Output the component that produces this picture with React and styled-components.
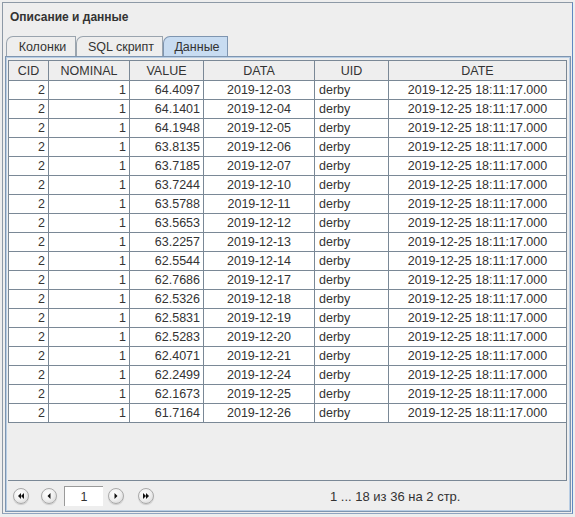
import React from "react";
import styled, { createGlobalStyle } from "styled-components";

const Global = createGlobalStyle`
  html, body { margin: 0; padding: 0; background: #eeeeee; }
  body { font-family: "Liberation Sans", Arial, sans-serif; font-size: 12.5px; color: #333; }
`;

const Frame = styled.div`
  margin: 2px 0 0 2px;
  width: 571px;
  height: 512px;
  box-sizing: border-box;
  border-left: 1px solid #8d99a6;
  border-top: 1px solid #8d99a6;
  border-right: 1px solid #5f88c2;
  border-bottom: 1px solid #8ea4c0;
  display: flex;
  flex-direction: column;
  padding: 0 1px 1px 2px;
`;

const Title = styled.div`
  height: 29px;
  box-sizing: border-box;
  display: flex;
  align-items: center;
  padding: 0 0 2px 5px;
  font-size: 12px;
  font-weight: bold;
  color: #333;
`;

const TabRow = styled.div`
  display: flex;
  height: 20px;
  margin-top: 4px;
  padding-left: 1px;
`;

const Tab = styled.div`
  height: 20px;
  box-sizing: border-box;
  width: ${(p) => p.$w}px;
  display: flex;
  align-items: center;
  justify-content: center;
  padding-left: 3px;
  border: 1px solid ${(p) => (p.$active ? "#7e95b0" : "#9aa4ae")};
  border-bottom: none;
  border-top-left-radius: 7px;
  background: ${(p) => (p.$active ? "#c8dcf1" : "#eeeeee")};
  color: #333;
`;

const TabPanel = styled.div`
  flex: 1;
  border: 1px solid #7e95b0;
  box-shadow: inset 0 0 0 1px #b9cee4;
  padding: 3px 3px 0 2px;
  display: flex;
  flex-direction: column;
`;

const ScrollArea = styled.div`
  height: 421px;
  box-sizing: border-box;
  border-right: 1px solid #7a8896;
  border-bottom: 1px solid #7a8896;
  overflow: hidden;
`;

const Table = styled.table`
  border-collapse: collapse;
  table-layout: fixed;
  width: 558px;
`;

const Th = styled.th`
  height: 20px;
  box-sizing: border-box;
  padding: 0;
  font-weight: normal;
  text-align: center;
  background: #eeeeee;
  border: 1px solid #7a8896;
  color: #333;
`;

const Td = styled.td`
  height: 19px;
  box-sizing: border-box;
  padding: 0 ${(p) => (p.$align === "right" ? "3px" : "0")} 0 ${(p) => (p.$align === "left" ? "4px" : "0")};
  text-align: ${(p) => p.$align};
  background: #ffffff;
  border: 1px solid #7a8896;
  color: #333;
  white-space: nowrap;
`;

const Pager = styled.div`
  height: 30px;
  display: flex;
  align-items: center;
  padding-left: 5px;
`;

const RoundBtn = styled.div`
  width: 16px;
  height: 16px;
  flex: none;
  border-radius: 50%;
  box-sizing: border-box;
  border: 1px solid #a9a9a9;
  background: radial-gradient(circle at 40% 35%, #ffffff 0%, #f2f2f2 45%, #cfcfcf 100%);
  display: flex;
  align-items: center;
  justify-content: center;
  margin-right: ${(p) => p.$mr}px;
  box-shadow: 0 1px 1px rgba(0,0,0,0.15);
`;

const PageField = styled.div`
  width: 39px;
  height: 20px;
  flex: none;
  box-sizing: border-box;
  background: #ffffff;
  border-top: 1px solid #9a9a9a;
  border-left: 1px solid #9a9a9a;
  display: flex;
  align-items: center;
  justify-content: center;
  margin-right: 5px;
  color: #333;
`;

const PageInfo = styled.div`
  margin-left: 176px;
  font-size: 13px;
  color: #333;
  white-space: nowrap;
`;

const Arrow = ({ dir, double }) => {
  const tri = (x) =>
    dir === "left"
      ? `M${x} 2 L${x} 8 L${x - 3} 5 Z`
      : `M${x} 2 L${x} 8 L${x + 3} 5 Z`;
  return (
    <svg width="10" height="10" viewBox="0 0 10 10">
      {double ? (
        dir === "left" ? (
          <>
            <path d={tri(5)} fill="#111" />
            <path d={tri(8)} fill="#111" />
          </>
        ) : (
          <>
            <path d={tri(2)} fill="#111" />
            <path d={tri(5)} fill="#111" />
          </>
        )
      ) : dir === "left" ? (
        <path d={tri(6.5)} fill="#111" />
      ) : (
        <path d={tri(3.5)} fill="#111" />
      )}
    </svg>
  );
};

const rows = [
  ["64.4097", "2019-12-03"],
  ["64.1401", "2019-12-04"],
  ["64.1948", "2019-12-05"],
  ["63.8135", "2019-12-06"],
  ["63.7185", "2019-12-07"],
  ["63.7244", "2019-12-10"],
  ["63.5788", "2019-12-11"],
  ["63.5653", "2019-12-12"],
  ["63.2257", "2019-12-13"],
  ["62.5544", "2019-12-14"],
  ["62.7686", "2019-12-17"],
  ["62.5326", "2019-12-18"],
  ["62.5831", "2019-12-19"],
  ["62.5283", "2019-12-20"],
  ["62.4071", "2019-12-21"],
  ["62.2499", "2019-12-24"],
  ["62.1673", "2019-12-25"],
  ["61.7164", "2019-12-26"],
];

const cols = [
  ["CID", 40],
  ["NOMINAL", 81],
  ["VALUE", 74],
  ["DATA", 111],
  ["UID", 74],
  ["DATE", 178],
];

export default function App() {
  return (
    <>
      <Global />
      <Frame>
        <Title>Описание и данные</Title>
        <TabRow>
          <Tab $w={70}>Колонки</Tab>
          <Tab $w={87}>SQL скрипт</Tab>
          <Tab $w={65} $active>Данные</Tab>
        </TabRow>
        <TabPanel>
          <ScrollArea>
            <Table>
              <colgroup>
                {cols.map(([n, w]) => (
                  <col key={n} style={{ width: w }} />
                ))}
              </colgroup>
              <thead>
                <tr>
                  {cols.map(([n]) => (
                    <Th key={n}>{n}</Th>
                  ))}
                </tr>
              </thead>
              <tbody>
                {rows.map(([v, d]) => (
                  <tr key={d}>
                    <Td $align="right">2</Td>
                    <Td $align="right">1</Td>
                    <Td $align="right">{v}</Td>
                    <Td $align="center">{d}</Td>
                    <Td $align="left">derby</Td>
                    <Td $align="center">2019-12-25 18:11:17.000</Td>
                  </tr>
                ))}
              </tbody>
            </Table>
          </ScrollArea>
          <Pager>
            <RoundBtn $mr={12}><Arrow dir="left" double /></RoundBtn>
            <RoundBtn $mr={7}><Arrow dir="left" /></RoundBtn>
            <PageField>1</PageField>
            <RoundBtn $mr={14}><Arrow dir="right" /></RoundBtn>
            <RoundBtn $mr={0}><Arrow dir="right" double /></RoundBtn>
            <PageInfo>1 ... 18 из 36 на 2 стр.</PageInfo>
          </Pager>
        </TabPanel>
      </Frame>
    </>
  );
}
